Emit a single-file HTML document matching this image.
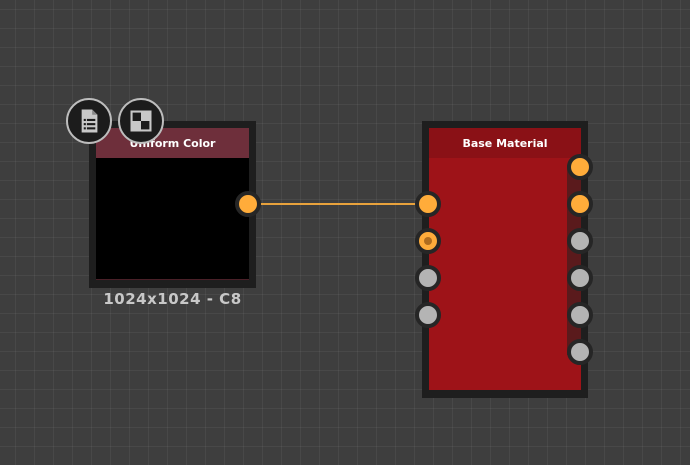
<!DOCTYPE html>
<html><head><style>
body{margin:0;width:690px;height:465px;overflow:hidden;position:relative;font-family:"Liberation Sans",sans-serif;
background-color:#3e3e3e;
background-image:linear-gradient(90deg,rgba(255,255,255,0.05) 1px,transparent 1px),linear-gradient(rgba(255,255,255,0.05) 1px,transparent 1px);
background-size:19px 19px;background-position:15px 9px;}
.a{position:absolute}
.port{position:absolute;width:18px;height:18px;border-radius:50%;border:4px solid #262626;}
.o{background:#ffac3a}.g{background:#b4b4b4}
</style></head><body>
<div class="a" style="left:258px;top:203px;width:160px;height:2px;background:#e8a23c"></div>
<div class="a" style="left:89px;top:121px;width:167px;height:167px;background:#1e1e1e"></div>
<div class="a" style="left:96px;top:128px;width:153px;height:30px;background:#6e2f3b;color:#fff;font-weight:bold;font-size:11px;text-align:center;line-height:31px;font-family:'DejaVu Sans',sans-serif">Uniform Color</div>
<div class="a" style="left:96px;top:158px;width:153px;height:121px;background:#000;border-bottom:1px solid #4a2028"></div>
<div class="port o" style="left:235px;top:191px"></div>
<div class="a" style="left:84px;top:290px;width:177px;text-align:center;color:#c8c8c8;font-weight:bold;font-size:15px;letter-spacing:0.5px;font-family:'DejaVu Sans',sans-serif">1024x1024 - C8</div>
<div class="a" style="left:66px;top:98px;width:42px;height:42px;border-radius:50%;background:#1c1c1c;border:2px solid #bdbdbd">
<svg width="42" height="42" viewBox="0 0 40 40"><path d="M13 9h10l5 5v17H13z" fill="#c8c8c8"/><path d="M23 9v5h5" fill="#888"/><g fill="#1c1c1c"><rect x="15" y="18" width="2" height="2"/><rect x="18" y="18" width="8" height="2"/><rect x="15" y="22" width="2" height="2"/><rect x="18" y="22" width="8" height="2"/><rect x="15" y="26" width="2" height="2"/><rect x="18" y="26" width="8" height="2"/></g></svg></div>
<div class="a" style="left:118px;top:98px;width:42px;height:42px;border-radius:50%;background:#1c1c1c;border:2px solid #bdbdbd">
<svg width="42" height="42" viewBox="0 0 40 40"><rect x="10" y="10" width="20" height="20" fill="#c8c8c8"/><rect x="12" y="12" width="8" height="8" fill="#1c1c1c"/><rect x="20" y="20" width="8" height="8" fill="#1c1c1c"/></svg></div>
<div class="a" style="left:422px;top:121px;width:166px;height:277px;background:#1e1e1e"></div>
<div class="a" style="left:429px;top:128px;width:152px;height:30px;background:#8a1116;color:#fff;font-weight:bold;font-size:11px;text-align:center;line-height:31px;font-family:'DejaVu Sans',sans-serif">Base Material</div>
<div class="a" style="left:429px;top:158px;width:152px;height:232px;background:#9e1318"></div>
<div class="a" style="left:567px;top:165px;width:14px;height:190px;background:#5a1a1c"></div>
<div class="port o" style="left:415px;top:191px"></div>
<div class="port o" style="left:415px;top:228px"><div style="width:8px;height:8px;border-radius:50%;background:#b06d1f;margin:5px"></div></div>
<div class="port g" style="left:415px;top:265px"></div>
<div class="port g" style="left:415px;top:302px"></div>
<div class="port o" style="left:567px;top:154px"></div>
<div class="port o" style="left:567px;top:191px"></div>
<div class="port g" style="left:567px;top:228px"></div>
<div class="port g" style="left:567px;top:265px"></div>
<div class="port g" style="left:567px;top:302px"></div>
<div class="port g" style="left:567px;top:339px"></div>
</body></html>
